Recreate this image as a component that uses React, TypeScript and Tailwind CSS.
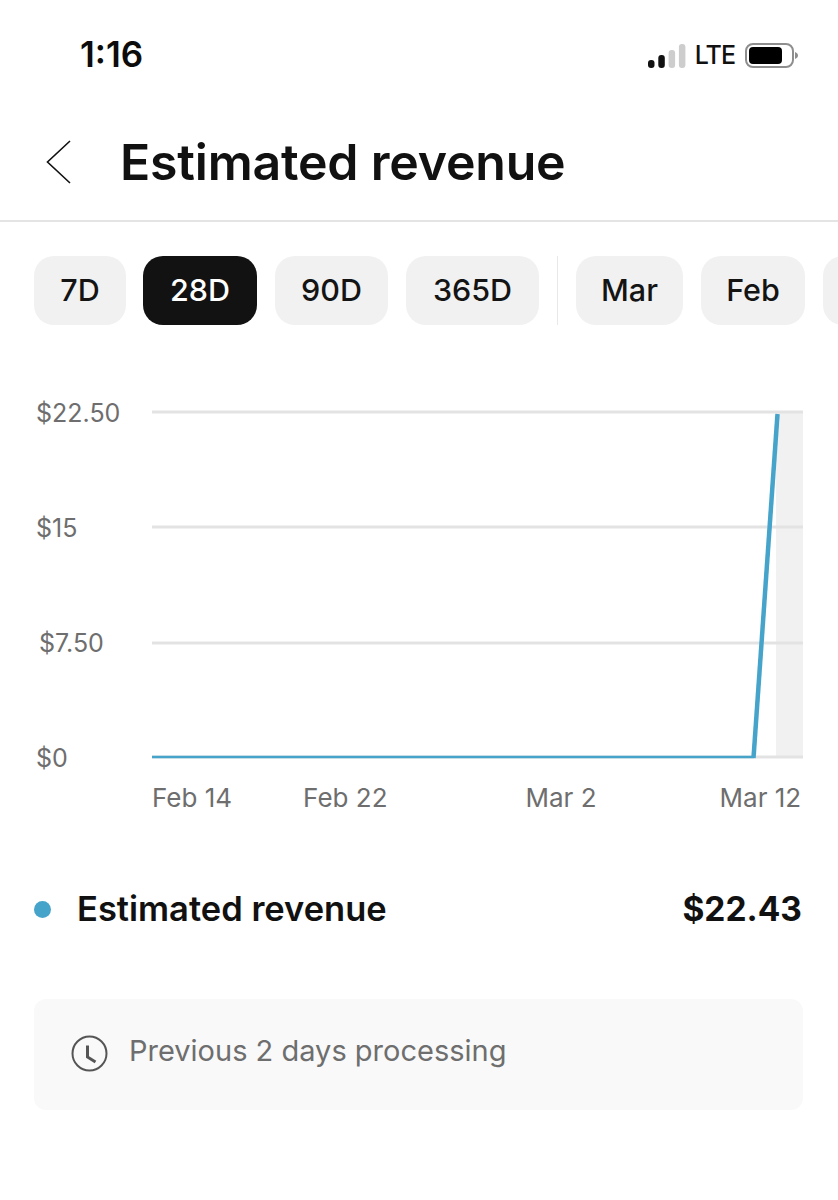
const ranges = ["7D", "28D", "90D", "365D"]
const yLabels = ["$22.50", "$15", "$7.50", "$0"]

function Chip({ label, active, className }: { label: string; active?: boolean; className: string }) {
  return (
    <div
      className={`flex h-[69px] shrink-0 items-center justify-center rounded-[20px] pb-[2px] text-[30.5px] font-medium ${className} ${
        active ? "bg-[#121212] text-white" : "bg-[#f1f1f1] text-[#141414]"
      }`}
    >
      {label}
    </div>
  )
}

function StatusBar() {
  return (
    <div className="flex h-[108px] items-start justify-between pl-[80px] pr-[40px] pt-[32px]">
      <span className="mt-[1px] text-[35px] leading-[42px] font-semibold text-[#0c0c0c]">1:16</span>
      <div className="flex items-center pt-[8px]">
        <svg width="38" height="25" viewBox="0 0 38 25" className="mr-[9px]">
          <rect x="0" y="17" width="6.5" height="8" rx="3" fill="#111" />
          <rect x="10.3" y="12" width="6.5" height="13" rx="3" fill="#111" />
          <rect x="20.6" y="7" width="6.5" height="18" rx="3" fill="#cdcdcd" />
          <rect x="30.9" y="1" width="6.5" height="24" rx="3" fill="#cdcdcd" />
        </svg>
        <span className="mr-[10px] text-[25px] leading-[30px] font-medium tracking-[-1px] text-[#111]">LTE</span>
        <svg width="53" height="25" viewBox="0 0 53 25">
          <rect x="1" y="1" width="47" height="23" rx="7" fill="none" stroke="#8e8e8e" strokeWidth="2" />
          <rect x="4" y="4" width="33" height="17" rx="4" fill="#000" />
          <path d="M50 9 C52 10 53 11 53 12.5 C53 14 52 15 50 16 Z" fill="#8e8e8e" />
        </svg>
      </div>
    </div>
  )
}

export default function App() {
  return (
    <div className="h-[1200px] w-[838px] overflow-hidden bg-white font-['Inter',sans-serif]">
      <StatusBar />

      {/* Header */}
      <div className="flex h-[114px] items-center border-b-2 border-[#e4e4e4] pb-[4px]">
        <svg width="25" height="44" viewBox="0 0 25 44" fill="none" stroke="#111" strokeWidth="1.6" className="ml-[46px]">
          <path d="M24 1 L1.5 22 L24 43" />
        </svg>
        <h1 className="ml-[49px] text-[50px] leading-[56px] font-semibold tracking-[-0.2px] text-[#111]">
          Estimated revenue
        </h1>
      </div>

      {/* Range chips */}
      <div className="mt-[34px] flex items-stretch pl-[34px]">
        <Chip label={ranges[0]} className="w-[92px]" />
        <Chip label={ranges[1]} active className="ml-[17px] w-[114px]" />
        <Chip label={ranges[2]} className="ml-[18px] w-[113px]" />
        <Chip label={ranges[3]} className="ml-[18px] w-[133px]" />
        <div className="ml-[18px] w-[1px] shrink-0 bg-[#e8e8e8]" />
        <Chip label="Mar" className="ml-[18px] w-[107px]" />
        <Chip label="Feb" className="ml-[18px] w-[104px]" />
        <Chip label="" className="ml-[18px] w-[60px]" />
      </div>

      {/* Chart */}
      <div className="mt-[71px] flex pl-[36px]">
        <div className="mt-[1px] flex h-[377px] w-[116px] flex-col justify-between text-[25px] leading-[32px] text-[#6e6e6e]">
          {yLabels.map((l) => (
            <span key={l} className={l === "$7.50" ? "pl-[3px]" : ""}>
              {l}
            </span>
          ))}
        </div>
        <svg width="652" height="377" viewBox="0 0 652 377">
          <rect x="624" y="16" width="27" height="345" fill="#f1f1f1" />
          <line x1="0" y1="16" x2="651" y2="16" stroke="#e3e3e3" strokeWidth="3" />
          <line x1="0" y1="131" x2="651" y2="131" stroke="#e3e3e3" strokeWidth="3" />
          <line x1="0" y1="247" x2="651" y2="247" stroke="#e3e3e3" strokeWidth="3" />
          <line x1="0" y1="361" x2="651" y2="361" stroke="#e3e3e3" strokeWidth="3" />
          <line x1="0" y1="361" x2="602" y2="361" stroke="#46a4cb" strokeWidth="2.5" />
          <line x1="601.5" y1="362" x2="625.5" y2="18" stroke="#46a4cb" strokeWidth="4.5" />
        </svg>
      </div>
      <div className="mt-[8px] flex pl-[152px] text-[26px] leading-[32px] text-[#6e6e6e]">
        <span>Feb 14</span>
        <span className="ml-[71px]">Feb 22</span>
        <span className="ml-[138px]">Mar 2</span>
        <span className="ml-[123px]">Mar 12</span>
      </div>

      {/* Legend */}
      <div className="mt-[74px] flex items-center pl-[34px] pr-[36px]">
        <div className="h-[17px] w-[17px] rounded-full bg-[#46a4cb]" />
        <span className="ml-[26px] text-[34.5px] leading-[42px] font-semibold text-[#111]">Estimated revenue</span>
        <span className="ml-auto text-[33.5px] leading-[42px] font-bold text-[#111]">$22.43</span>
      </div>

      {/* Processing note */}
      <div className="mx-[34px] mt-[69px] flex h-[111px] w-[769px] items-center rounded-[12px] bg-[#f9f9f9] pl-[37px]">
        <svg width="37" height="37" viewBox="0 0 37 37" fill="none" stroke="#555" className="mt-[-2px]">
          <circle cx="18.5" cy="18.5" r="17" strokeWidth="2" />
          <path d="M16.5 10.5 V22 L24.5 27" strokeWidth="3" />
        </svg>
        <span className="ml-[21px] mt-[-7px] text-[29px] leading-[36px] text-[#6e6e6e]">Previous 2 days processing</span>
      </div>
    </div>
  )
}
